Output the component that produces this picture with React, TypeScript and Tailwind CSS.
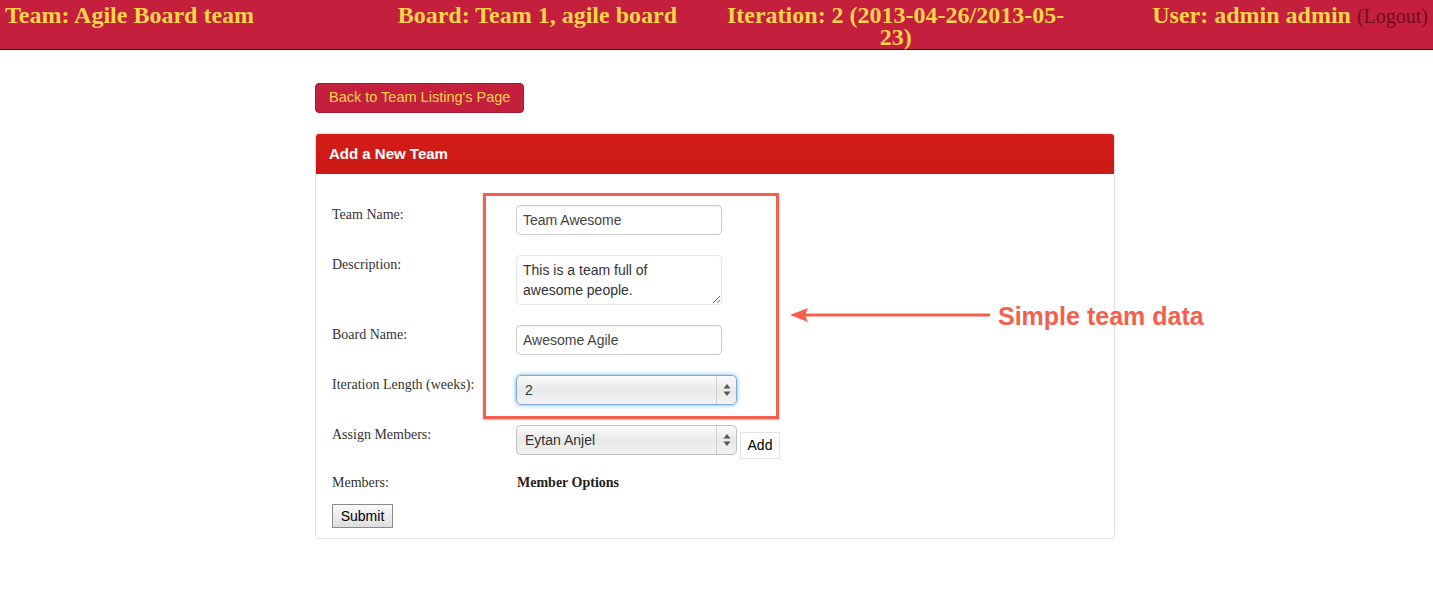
import React from "react";

const serif = "font-['Liberation_Serif','Times_New_Roman',serif]";
const sans = "font-['Liberation_Sans',Arial,sans-serif]";

function SelectArrows() {
  return (
    <svg width="8" height="14" viewBox="0 0 8 14" className="shrink-0">
      <path d="M4 1 L7.5 5.5 L0.5 5.5 Z" fill="#555" />
      <path d="M4 13 L7.5 8.5 L0.5 8.5 Z" fill="#555" />
    </svg>
  );
}

function FakeSelect({ value, focused }: { value: string; focused?: boolean }) {
  return (
    <div
      className={`flex h-[30px] w-[221px] items-stretch rounded-[5px] border bg-gradient-to-b from-[#fbfbfb] via-[#e9e9e9] to-[#f2f2f2] ${
        focused
          ? "border-[#7aa9dc] shadow-[0_0_4px_rgba(82,168,236,0.9)]"
          : "border-[#bdbdbd] shadow-[inset_0_1px_0_#fff]"
      }`}
    >
      <span className={`flex-1 pl-[8px] text-[14px] leading-[28px] text-[#333] ${sans}`}>{value}</span>
      <span className="flex w-[20px] items-center justify-center border-l border-[#cfcfcf]">
        <SelectArrows />
      </span>
    </div>
  );
}

function Row({ label, children, className }: { label: string; children: React.ReactNode; className?: string }) {
  return (
    <div className={`flex items-start ${className ?? ""}`}>
      <div className={`w-[184px] shrink-0 text-[14px] leading-5 text-[#333] ${serif}`}>{label}</div>
      {children}
    </div>
  );
}

export default function App() {
  const inputCls = `h-[30px] w-[206px] rounded-[4px] border border-[#cccccc] bg-white px-[6px] text-[14px] leading-5 text-[#444] shadow-[inset_0_1px_1px_rgba(0,0,0,0.075)] outline-none ${sans}`;

  return (
    <div className="relative min-h-[605px] bg-white">
      {/* Top bar */}
      <header
        className={`grid h-[50px] grid-cols-4 border-b border-black bg-[#c41f3c] pt-[4px] text-[24px] font-bold leading-[22px] text-[#fbd648] ${serif}`}
      >
        <div className="px-[5px] text-left">Team: Agile Board team</div>
        <div className="px-[5px] text-center">Board: Team 1, agile board</div>
        <div className="px-[5px] text-center">Iteration: 2 (2013-04-26/2013-05-23)</div>
        <div className="px-[5px] text-right">
          User: admin admin <span className="text-[20px] font-normal text-[#720d1f]">(Logout)</span>
        </div>
      </header>

      <main className="ml-[315px] w-[800px] pt-[33px]">
        <button
          className={`block h-[30px] rounded-[4px] border border-[#a9182f] bg-[#c41f3c] px-[13px] text-[14.5px] text-[#fbd648] ${sans}`}
        >
          Back to Team Listing's Page
        </button>

        <section className="mt-[20px] overflow-hidden rounded-[4px] border border-[#e2e2e2]">
          <div className="flex h-[40px] items-center bg-gradient-to-b from-[#d41c18] to-[#cb1915] px-[13px]">
            <h2 className={`text-[15px] font-bold text-white ${sans}`}>Add a New Team</h2>
          </div>

          <div className="pl-[16px] pt-[31px] pb-[10px]">
            <Row label="Team Name:" className="mb-[20px]">
              <input className={inputCls} defaultValue="Team Awesome" />
            </Row>
            <Row label="Description:" className="mb-[20px]">
              <textarea
                className={`block h-[50px] w-[206px] overflow-hidden rounded-[4px] border border-[#e6e6e6] bg-white py-[4px] pl-[6px] pr-[24px] text-[14px] leading-5 text-[#333] outline-none ${sans}`}
                defaultValue={"This is a team full of awesome people."}
              />
            </Row>
            <Row label="Board Name:" className="mb-[20px]">
              <input className={inputCls} defaultValue="Awesome Agile" />
            </Row>
            <Row label="Iteration Length (weeks):" className="mb-[20px]">
              <FakeSelect value="2" focused />
            </Row>
            <Row label="Assign Members:" className="mb-[14px]">
              <FakeSelect value="Eytan Anjel" />
              <button
                className={`ml-[3px] mt-[7px] h-[27px] w-[40px] border border-[#e3e3e3] bg-white text-[14px] text-black ${sans}`}
              >
                Add
              </button>
            </Row>
            <Row label="Members:" className="mb-[11px]">
              <span className={`pl-[1px] text-[14px] font-bold leading-5 text-[#222] ${serif}`}>Member Options</span>
            </Row>
            <button
              className={`block h-[24px] w-[61px] border border-[#8a8a8a] bg-gradient-to-b from-[#fafafa] to-[#dedede] text-[14px] text-black ${sans}`}
            >
              Submit
            </button>
          </div>
        </section>
      </main>

      {/* Annotation overlay */}
      <div className="absolute left-[483px] top-[193px] h-[226px] w-[296px] border-[3px] border-[#f3604e] shadow-[0_1px_2px_rgba(0,0,0,0.25)]" />
      <svg className="absolute left-[786px] top-[305px]" width="210" height="20" viewBox="0 0 210 20">
        <path d="M4 10 L22 3 L19 10 L22 17 Z" fill="#f3604e" />
        <rect x="18" y="8.5" width="186" height="3" fill="#f3604e" />
      </svg>
      <div className={`absolute left-[998px] top-[301px] text-[25px] font-bold leading-[30px] text-[#f3604e] ${sans}`}>
        Simple team data
      </div>
    </div>
  );
}
